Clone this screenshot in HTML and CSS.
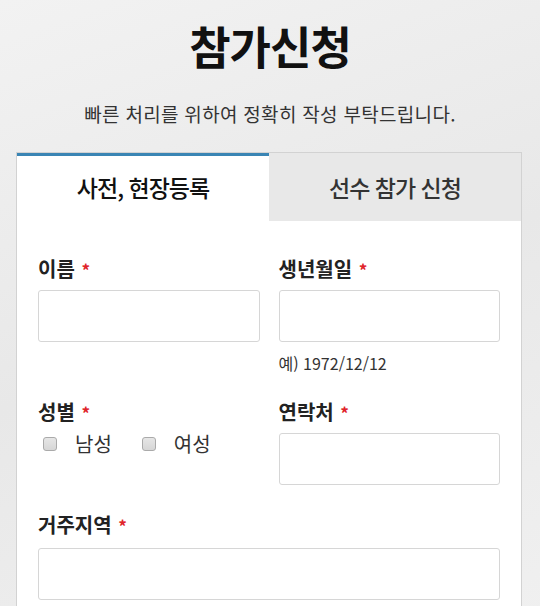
FILE: index.html
```html
<!DOCTYPE html>
<html lang="ko">
<head>
    <meta charset="UTF-8">
    <meta name="viewport" content="width=device-width, initial-scale=1.0">
    <title>참가신청</title>
    <link rel="stylesheet" href="styles.css">
</head>
<body>
    <h1 class="title">참가신청</h1>
    <p class="lead">빠른 처리를 위하여 정확히 작성 부탁드립니다.</p>

    <div class="card">
        <div class="tabs">
            <div class="tab active">사전, 현장등록</div>
            <div class="tab">선수 참가 신청</div>
        </div>

        <form class="form">
            <div class="field">
                <label class="label">이름 <span class="req">*</span></label>
                <input type="text" class="input">
            </div>
            <div class="field">
                <label class="label">생년월일 <span class="req">*</span></label>
                <input type="text" class="input">
                <div class="hint">예) 1972/12/12</div>
            </div>

            <div class="field">
                <label class="label">성별 <span class="req">*</span></label>
                <div class="checks">
                    <label class="check"><span class="box"></span>남성</label>
                    <label class="check"><span class="box"></span>여성</label>
                </div>
            </div>
            <div class="field">
                <label class="label">연락처 <span class="req">*</span></label>
                <input type="text" class="input">
            </div>

            <div class="field wide">
                <label class="label">거주지역 <span class="req">*</span></label>
                <input type="text" class="input">
            </div>
        </form>
    </div>
</body>
</html>
```

FILE: styles.css
```css
body {
    margin: 0;
    min-height: 606px;
    background: linear-gradient(160deg, #f2f2f2 0%, #e8e8e8 50%, #f0f0f0 100%);
    font-family: 'Noto Sans CJK KR', 'Noto Sans', sans-serif;
    color: #222;
}
.title {
    margin: 0;
    padding-top: 16px;
    text-align: center;
    font-size: 45px;
    font-weight: 700;
    line-height: 60px;
    letter-spacing: -1px;
    color: #111;
}
.lead {
    margin: 25px 0 0;
    text-align: center;
    font-size: 19px;
    line-height: 26px;
    letter-spacing: 0.3px;
    color: #333;
}
.card {
    margin: 25px 18px 0 16px;
    background: #fff;
    border: 1px solid #d2d2d2;
    border-bottom: none;
}
.tabs {
    display: flex;
}
.tab {
    flex: 1;
    height: 65px;
    line-height: 63px;
    text-align: center;
    font-size: 23px;
    font-weight: 500;
    letter-spacing: -1px;
    color: #333;
    background: #e8e8e8;
    border-top: 3px solid #e8e8e8;
}
.tab.active {
    background: #fff;
    border-top-color: #3a85b4;
    color: #111;
}
.form {
    display: grid;
    grid-template-columns: 1fr 1fr;
    column-gap: 19px;
    padding: 34px 21px 0;
}
.field {
    margin-bottom: 23px;
}
.field.wide {
    grid-column: 1 / 3;
    margin-top: 3px;
}
.label {
    display: block;
    font-size: 20px;
    font-weight: 700;
    line-height: 28px;
    color: #222;
}
.req {
    margin-left: 1px;
    color: #e0242a;
    font-size: 17px;
}
.input {
    display: block;
    box-sizing: border-box;
    width: 100%;
    height: 52px;
    margin-top: 6px;
    border: 1px solid #d6d6d6;
    border-radius: 3px;
    background: #fff;
}
.wide .input {
    margin-top: 8px;
}
.hint {
    margin-top: 9px;
    font-size: 16px;
    line-height: 24px;
    color: #333;
}
.checks {
    display: flex;
    gap: 30px;
    margin-top: 3px;
    padding-left: 5px;
}
.check {
    display: flex;
    align-items: center;
    gap: 18px;
    font-size: 20px;
    line-height: 28px;
    color: #333;
}
.box {
    width: 12px;
    height: 12px;
    border: 1px solid #aaa;
    border-radius: 3px;
    background: linear-gradient(#e6e6e6, #d6d6d6);
}
```
